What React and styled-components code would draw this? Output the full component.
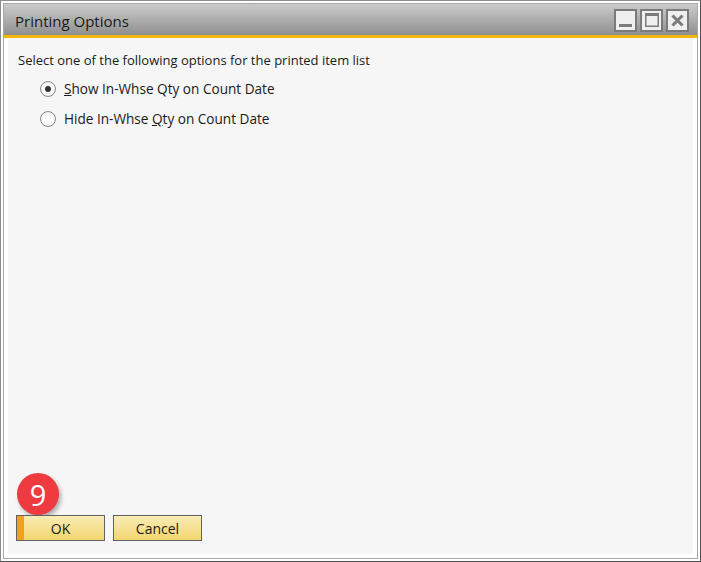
import React from "react";
import styled, { createGlobalStyle } from "styled-components";

const Global = createGlobalStyle`
  html, body { margin: 0; padding: 0; background: #fff; }
  body { font-family: "Open Sans", "Noto Sans", sans-serif; }
`;

const Frame = styled.div`
  box-sizing: border-box;
  width: 701px;
  height: 562px;
  border: 1px solid #8c8c8c;
  border-right-color: #505050;
  border-bottom-color: #505050;
  padding: 2px;
  background: #fff;
`;

const Window = styled.div`
  box-sizing: border-box;
  height: 100%;
  border: 1px solid #a8a8a8;
  display: flex;
  flex-direction: column;
  background: #fff;
`;

const TitleBar = styled.div`
  height: 31px;
  flex: none;
  display: flex;
  align-items: center;
  justify-content: space-between;
  padding: 0 8px 0 11px;
  background: linear-gradient(#cbcbcb, #8f8f8f);
  border-bottom: 3px solid #f2b705;
`;

const Title = styled.span`
  font-size: 15px;
  color: #1a1a1a;
  padding-top: 2px;
`;

const Controls = styled.div`
  display: flex;
  gap: 3px;
  padding-top: 1px;
`;

const Ctrl = styled.div`
  box-sizing: border-box;
  width: 23px;
  height: 23px;
  border: 2px solid #7b7b7b;
  background: #efefef;
  display: flex;
  align-items: center;
  justify-content: center;
`;

const Body = styled.div`
  flex: 1;
  margin: 0 4px 4px 4px;
  background: #f6f6f6;
  display: flex;
  flex-direction: column;
  padding: 13px 10px 10px 10px;
  font-size: 13px;
  color: #1a1a1a;
`;

const Prompt = styled.div`
  margin-bottom: 10px;
`;

const Options = styled.div`
  display: flex;
  flex-direction: column;
  gap: 11px;
  padding-left: 22px;
`;

const Option = styled.label`
  display: flex;
  align-items: center;
  gap: 8px;
  font-size: 13.6px;
`;

const Radio = styled.span`
  box-sizing: border-box;
  width: 16px;
  height: 16px;
  border-radius: 50%;
  border: 1px solid #8a8a8a;
  background: radial-gradient(circle, #ffffff 40%, #e2e2e2 100%);
  display: flex;
  align-items: center;
  justify-content: center;
  &::after {
    content: "";
    width: 6px;
    height: 6px;
    border-radius: 50%;
    background: ${(p) => (p.checked ? "#333" : "transparent")};
  }
`;

const Spacer = styled.div`
  flex: 1;
`;

const Footer = styled.div`
  position: relative;
  display: flex;
  gap: 8px;
  margin-left: -2px;
  margin-bottom: 3px;
`;

const Button = styled.button`
  box-sizing: border-box;
  width: 89px;
  height: 26px;
  border: 1px solid #626262;
  background: linear-gradient(#f9edb6, #f3d66f);
  font-family: inherit;
  font-size: 14px;
  color: #1a1a1a;
  padding: 0;
  position: relative;
  ${(p) =>
    p.primary &&
    `box-shadow: inset 7px 0 0 #f0a020;`}
`;

const Badge = styled.div`
  position: absolute;
  left: 1px;
  top: -42px;
  width: 42px;
  height: 42px;
  border-radius: 50%;
  background: #ef3a40;
  color: #fff;
  font-size: 29px;
  font-family: "Open Sans", sans-serif;
  display: flex;
  align-items: center;
  justify-content: center;
  box-shadow: 2px 3px 4px rgba(0,0,0,0.3);
`;

const U = styled.span`
  text-decoration: underline;
`;

export default function App() {
  return (
    <>
      <Global />
      <Frame>
        <Window>
          <TitleBar>
            <Title>Printing Options</Title>
            <Controls>
              <Ctrl>
                <svg width="13" height="13" viewBox="0 0 13 13">
                  <rect x="0" y="10" width="13" height="3" fill="#7b7b7b" />
                </svg>
              </Ctrl>
              <Ctrl>
                <svg width="14" height="14" viewBox="0 0 14 14">
                  <rect x="0.75" y="0.75" width="12.5" height="12.5" fill="none" stroke="#7b7b7b" strokeWidth="1.5" />
                  <rect x="0" y="0" width="14" height="3" fill="#7b7b7b" />
                </svg>
              </Ctrl>
              <Ctrl>
                <svg width="13" height="13" viewBox="0 0 13 13">
                  <path d="M1.5 1.5 L11.5 11.5 M11.5 1.5 L1.5 11.5" stroke="#7b7b7b" strokeWidth="3" />
                </svg>
              </Ctrl>
            </Controls>
          </TitleBar>
          <Body>
            <Prompt>Select one of the following options for the printed item list</Prompt>
            <Options>
              <Option>
                <Radio checked />
                <span><U>S</U>how In-Whse Qty on Count Date</span>
              </Option>
              <Option>
                <Radio />
                <span>Hide In-Whse <U>Q</U>ty on Count Date</span>
              </Option>
            </Options>
            <Spacer />
            <Footer>
              <Badge>9</Badge>
              <Button primary>OK</Button>
              <Button>Cancel</Button>
            </Footer>
          </Body>
        </Window>
      </Frame>
    </>
  );
}
